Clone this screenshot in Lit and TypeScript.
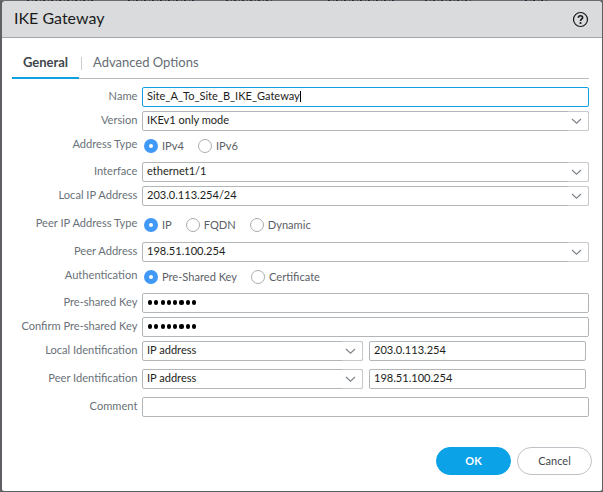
import { LitElement, html, css, svg, nothing } from "lit";
import { customElement, property } from "lit/decorators.js";

const chevron = html`<svg class="chevron" width="11" height="7" viewBox="0 0 11 7">
  ${svg`<path d="M1 1 L5.5 5.2 L10 1" fill="none" stroke="#7b828a" stroke-width="1.1"/>`}
</svg>`;

@customElement("form-field")
class FormField extends LitElement {
  @property() value = "";
  @property() kind = "text";
  @property({ type: Boolean }) focused = false;

  static styles = css`
    :host { display: block; flex: 1; min-width: 0; }
    .box {
      box-sizing: border-box; height: 20px; display: flex; align-items: center;
      border: 1px solid #b3b6b9; border-radius: 2px; background: #fff; padding-left: 4px;
      color: #1c1e20; font: 11.05px/18px Lato, sans-serif;
    }
    .box.focused { border-color: #10a0e2; }
    .text { flex: 1; white-space: pre; position: relative; top: -1px; }
    .caret { display: inline-block; width: 1px; height: 11px; margin-right: -1px; background: #000; vertical-align: -2px; }
    .dots { display: flex; gap: 2.1px; padding: 0 0 1px 1px; }
    .dot { width: 4.2px; height: 4.2px; border-radius: 50%; background: #000; }
    .trigger {
      box-sizing: border-box; width: 21px; height: 20px; margin: -1px -1px;
      border: 1px solid #c6cacd; border-left: 0; border-radius: 0 2px 2px 0;
      display: flex; align-items: center; justify-content: center; padding: 1px 3px 0 0;
    }
  `;

  render() {
    return html`<div class="box ${this.focused ? "focused" : ""}">
      ${this.kind === "password"
        ? html`<span class="dots">${Array.from({ length: 8 }, () => html`<i class="dot"></i>`)}</span>`
        : html`<span class="text">${this.value}${this.focused ? html`<i class="caret"></i>` : nothing}</span>`}
      ${this.kind === "select" ? html`<span class="trigger">${chevron}</span>` : nothing}
    </div>`;
  }
}

@customElement("radio-option")
class RadioOption extends LitElement {
  @property() label = "";
  @property({ type: Boolean }) checked = false;

  static styles = css`
    :host { display: flex; align-items: center; gap: 4px; font: 11.1px/14px Lato, sans-serif; color: #5c6166; }
    .circle { box-sizing: border-box; width: 14px; height: 14px; border-radius: 50%; border: 1px solid #a9adb1; background: #fff; }
    .circle.on { border: 5px solid #4098f7; }
    .label { white-space: nowrap; position: relative; top: -0.5px; }
  `;

  render() {
    return html`<span class="circle ${this.checked ? "on" : ""}"></span><span class="label">${this.label}</span>`;
  }
}

@customElement("app-root")
class AppRoot extends LitElement {
  static styles = css`
    :host { display: block; width: 603px; height: 492px; overflow: hidden; background: #5f6063; font-family: Lato, sans-serif; }
    .dialog {
      box-sizing: border-box; margin: 0 1px 0 2px; height: 490px; background: #fff;
      border-radius: 4px 4px 2px 2px; overflow: hidden; display: flex; flex-direction: column;
    }
    .backdrop {
      height: 1px; background: #696b71; padding-left: 27px;
      display: grid; grid-template-columns: 101px 98px 102px 97px 100px 1fr;
    }
    .cell { height: 1px; background: repeating-linear-gradient(90deg, #2b2a38 0 2px, #696b71 2px 5px, #4a4240 5px 6px, #696b71 6px 8px); }
    .long { width: 67px; }
    .mid { width: 47px; }
    .short { width: 23px; }
    .header {
      box-sizing: border-box; height: 37px; background: #dadbdd; border-bottom: 1px solid #a3a5a8;
      display: flex; align-items: center; justify-content: space-between; padding: 0 13px 0 12px;
    }
    .title { font-size: 16px; line-height: 20px; color: #1a1b1d; position: relative; top: -1px; }
    .tabs { margin: 12px 13px 0 10px; height: 28px; border-bottom: 1px solid #b9bbbe; display: flex; }
    .tab { box-sizing: border-box; height: 29px; font-size: 13px; line-height: 24px; color: #666d74; white-space: nowrap; }
    .tab.active { width: 67px; text-align: center; font-weight: 700; color: #3f464c; border-bottom: 2px solid #0ea2e4; }
    .separator { width: 1px; height: 13px; margin: 7px 11px 0 2px; background: #c9ccd0; }
    .form { padding: 8px 13px 0 0; display: grid; }
    .row { display: flex; height: 20px; }
    .name { width: 135.4px; margin-right: 4.6px; text-align: right; font-size: 11.1px; line-height: 18px; color: #697178; white-space: nowrap; }
    .options { display: flex; padding: 4px 0 0 2px; height: 14px; }
    .pair { display: flex; flex: 1; gap: 6px; padding-right: 3px; }
    .kind { flex: 0 0 221px; }
    .footer { display: flex; justify-content: flex-end; gap: 6px; margin: 30px 10px 0 0; }
    .button {
      box-sizing: border-box; width: 75px; height: 28px; padding: 0 0 1px; border-radius: 14px; border: 1px solid #bfc3c7;
      background: #fff; color: #42484e; font: 11px/24px Lato, sans-serif; text-align: center;
    }
    .button.primary { background: #0ba2e8; border-color: #0ba2e8; color: #fff; font-weight: 700; }
    .mt4 { margin-top: 4px; }
    .mt7 { margin-top: 7px; }
    .mt8 { margin-top: 8px; }
    .spaced { margin-left: 14px; }
  `;

  field(label: string, gap: string, value: string, kind = "text", focused = false) {
    return html`<div class="row ${gap}">
      <span class="name">${label}</span>
      <form-field .value=${value} .kind=${kind} ?focused=${focused}></form-field>
    </div>`;
  }

  radios(label: string, gap: string, options: string[]) {
    return html`<div class="row ${gap}">
      <span class="name">${label}</span>
      <span class="options">${options.map((o, i) => html`<radio-option class=${i ? "spaced" : ""} .label=${o} ?checked=${i === 0}></radio-option>`)}</span>
    </div>`;
  }

  identity(label: string, gap: string, value: string) {
    return html`<div class="row ${gap}">
      <span class="name">${label}</span>
      <div class="pair">
        <form-field class="kind" .value=${"IP address"} .kind=${"select"}></form-field>
        <form-field .value=${value}></form-field>
      </div>
    </div>`;
  }

  render() {
    const cells = ["long", "long", "mid", "long", "mid", "short"];
    return html`
      <div class="backdrop">${cells.map((c) => html`<span class="cell ${c}"></span>`)}</div>
      <div class="dialog">
        <div class="header">
          <span class="title">IKE Gateway</span>
          <svg class="help" width="17" height="17" viewBox="0 0 17 17">
            <circle cx="8.5" cy="8.5" r="7" fill="none" stroke="#17181a" stroke-width="1.2"/>
            <path d="M6.4 6.7 C6.4 4.1 10.6 4.1 10.6 6.6 C10.6 8.2 8.5 8.2 8.5 10" fill="none" stroke="#17181a" stroke-width="1.7"/>
            <circle cx="8.5" cy="12" r="1.1" fill="#17181a"/>
          </svg>
        </div>
        <div class="tabs">
          <span class="tab active">General</span>
          <span class="separator"></span>
          <span class="tab">Advanced Options</span>
        </div>
        <div class="form">
          ${this.field("Name", "", "Site_A_To_Site_B_IKE_Gateway", "text", true)}
          ${this.field("Version", "mt4", "IKEv1 only mode", "select")}
          ${this.radios("Address Type", "mt4", ["IPv4", "IPv6"])}
          ${this.field("Interface", "mt7", "ethernet1/1", "select")}
          ${this.field("Local IP Address", "mt4", "203.0.113.254/24", "select")}
          ${this.radios("Peer IP Address Type", "mt8", ["IP", "FQDN", "Dynamic"])}
          ${this.field("Peer Address", "mt8", "198.51.100.254", "select")}
          ${this.radios("Authentication", "mt4", ["Pre-Shared Key", "Certificate"])}
          ${this.field("Pre-shared Key", "mt7", "", "password")}
          ${this.field("Confirm Pre-shared Key", "mt4", "", "password")}
          ${this.identity("Local Identification", "mt4", "203.0.113.254")}
          ${this.identity("Peer Identification", "mt8", "198.51.100.254")}
          ${this.field("Comment", "mt8", "")}
        </div>
        <div class="footer">
          <button class="button primary">OK</button>
          <button class="button">Cancel</button>
        </div>
      </div>
    `;
  }
}
